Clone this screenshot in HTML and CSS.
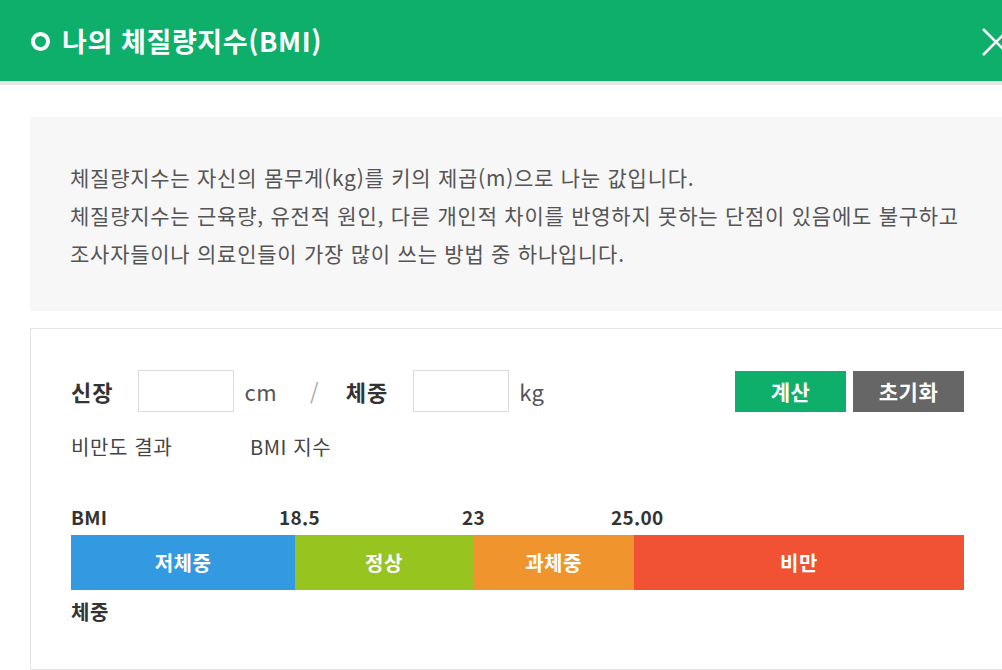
FILE: index.html
```html
<!DOCTYPE html>
<html lang="ko">
<head>
    <meta charset="UTF-8">
    <title>나의 체질량지수(BMI)</title>
    <link rel="stylesheet" href="styles.css">
</head>
<body>
    <div class="popup">
        <div class="popup-head">
            <span class="ring"></span>
            <h1 class="popup-title">나의 체질량지수(BMI)</h1>
            <button class="close-btn" aria-label="닫기">
                <svg width="34" height="34" viewBox="0 0 34 34">
                    <path d="M4 4 L30 30 M30 4 L4 30" stroke="#fff" stroke-width="2.6" fill="none"/>
                </svg>
            </button>
        </div>

        <div class="info-box">
            <p>체질량지수는 자신의 몸무게(kg)를 키의 제곱(m)으로 나눈 값입니다.</p>
            <p>체질량지수는 근육량, 유전적 원인, 다른 개인적 차이를 반영하지 못하는 단점이 있음에도 불구하고</p>
            <p>조사자들이나 의료인들이 가장 많이 쓰는 방법 중 하나입니다.</p>
        </div>

        <div class="calc-box">
            <div class="calc-inner">
                <div class="input-row">
                    <label class="field-label">신장</label>
                    <input class="field-input" type="text">
                    <span class="unit">cm</span>
                    <span class="slash">/</span>
                    <label class="field-label">체중</label>
                    <input class="field-input" type="text">
                    <span class="unit">kg</span>
                    <div class="btns">
                        <button class="btn btn-calc">계산</button>
                        <button class="btn btn-reset">초기화</button>
                    </div>
                </div>

                <div class="result-row">
                    <span class="result-label">비만도 결과</span>
                    <span>BMI 지수</span>
                </div>

                <div class="scale">
                    <div class="scale-nums">
                        <span class="num-bmi">BMI</span>
                        <span class="num-185">18.5</span>
                        <span class="num-23">23</span>
                        <span class="num-25">25.00</span>
                    </div>
                    <div class="scale-bar">
                        <div class="seg seg-low">저체중</div>
                        <div class="seg seg-normal">정상</div>
                        <div class="seg seg-over">과체중</div>
                        <div class="seg seg-obese">비만</div>
                    </div>
                    <div class="scale-weight">체중</div>
                </div>
            </div>
        </div>
    </div>
</body>
</html>
```

FILE: styles.css
```css
body {
    margin: 0;
    padding: 0;
    background-color: #fff;
    font-family: "Noto Sans CJK KR", "Noto Sans", sans-serif;
    color: #444;
    overflow: hidden;
}

.popup {
    width: 1040px;
}

.popup-head {
    display: flex;
    align-items: center;
    height: 81px;
    padding-left: 31px;
    background-color: #0daf6a;
    border-bottom: 4px solid #e6e6e6;
}

.ring {
    width: 11px;
    height: 11px;
    border: 4px solid #fff;
    border-radius: 50%;
    margin-right: 12px;
    margin-top: 1px;
}

.popup-title {
    margin: 0;
    font-size: 27px;
    font-weight: bold;
    color: #fff;
    letter-spacing: 0.6px;
}

.close-btn {
    margin-left: auto;
    margin-right: 27px;
    padding: 0;
    border: none;
    background: none;
    display: flex;
    margin-top: 2px;
}

.info-box {
    margin: 32px 0 17px 30px;
    padding: 41px 40px 39px;
    background-color: #f7f7f7;
}

.info-box p {
    margin: 0;
    font-size: 21px;
    line-height: 38px;
    color: #555;
    letter-spacing: 0.75px;
    white-space: nowrap;
}

.calc-box {
    margin-left: 30px;
    height: 340px;
    border: 1px solid #e5e5e5;
    border-right: none;
}

.calc-inner {
    width: 893px;
    padding: 41px 0 0 40px;
}

.input-row {
    display: flex;
    align-items: center;
}

.field-label {
    font-size: 22px;
    font-weight: bold;
    color: #333;
    letter-spacing: 1px;
}

.field-input {
    width: 94px;
    height: 40px;
    padding: 0;
    margin: 0 10px 0 25px;
    border: 1px solid #dcdcdc;
}

.unit {
    font-size: 22px;
    color: #555;
    letter-spacing: 0.5px;
}

.slash {
    margin: 0 27px 0 33px;
    font-size: 22px;
    color: #aaa;
}

.btns {
    margin-left: auto;
    display: flex;
    gap: 7px;
}

.btn {
    width: 111px;
    height: 41px;
    border: none;
    font-family: inherit;
    font-size: 21px;
    font-weight: bold;
    color: #fff;
    letter-spacing: 0.5px;
}

.btn-calc {
    background-color: #0daf6a;
}

.btn-reset {
    background-color: #666;
}

.result-row {
    display: flex;
    margin-top: 20px;
    font-size: 20px;
    color: #444;
    letter-spacing: 0.6px;
}

.result-label {
    width: 179px;
}

.scale {
    margin-top: 42px;
}

.scale-nums {
    position: relative;
    height: 32px;
    font-size: 19px;
    font-weight: bold;
    color: #333;
    letter-spacing: 0.3px;
}

.scale-nums span {
    position: absolute;
    top: 0;
}

.num-bmi { left: 0; }
.num-185 { left: 208px; }
.num-23 { left: 391px; }
.num-25 { left: 540px; }

.scale-bar {
    display: flex;
    height: 55px;
}

.seg {
    display: flex;
    align-items: center;
    justify-content: center;
    font-size: 20px;
    font-weight: bold;
    color: #fff;
    letter-spacing: 0.5px;
}

.seg-low { width: 224px; background-color: #3399e0; }
.seg-normal { width: 178px; background-color: #97c41f; }
.seg-over { width: 161px; background-color: #f0952d; }
.seg-obese { flex: 1; background-color: #f15233; }

.scale-weight {
    margin-top: 7px;
    font-size: 20px;
    font-weight: bold;
    color: #333;
    letter-spacing: 0.5px;
}
```
